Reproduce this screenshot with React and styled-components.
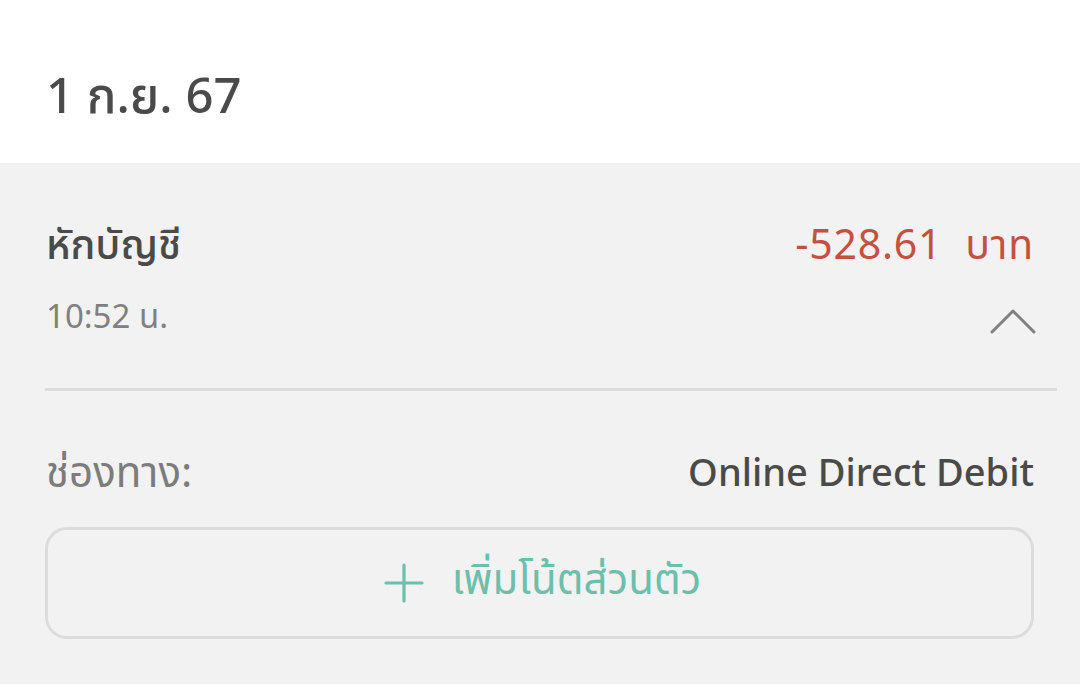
import React from "react";
import styled, { createGlobalStyle } from "styled-components";

const Global = createGlobalStyle`
  html, body { margin: 0; padding: 0; background: #ffffff; }
  body { font-family: "Noto Sans", "Noto Sans Thai", "Noto Sans Thai UI", sans-serif; }
  * { box-sizing: border-box; }
`;

const Page = styled.div`
  width: 1080px;
  height: 687px;
  display: flex;
  flex-direction: column;
  background: #ffffff;
  overflow: hidden;
`;

const DateHeader = styled.div`
  height: 163px;
  padding: 64px 0 0 46px;
  font-size: 49px;
  font-weight: 500;
  color: #4a4a4a;
  line-height: 60px;
`;

const Panel = styled.section`
  background: #f2f2f2;
  height: 521px;
  padding: 54px 23px 0 46px;
  display: flex;
  flex-direction: column;
`;

const Inner = styled.div`
  padding-right: 23px;
  margin-top: ${(p) => p.$top || 0}px;
`;

const Row = styled.div`
  display: flex;
  justify-content: space-between;
  align-items: ${(p) => p.$align || "center"};
  margin-top: ${(p) => p.$top || 0}px;
`;

const Title = styled.div`
  font-size: 41px;
  font-weight: 500;
  color: #4a4a4a;
  line-height: 52px;
`;

const Amount = styled.div`
  font-size: 41px;
  font-weight: 400;
  color: #c4513f;
  line-height: 52px;
  letter-spacing: 0.8px;
  white-space: pre;
`;

const Time = styled.div`
  font-size: 33px;
  color: #808080;
  line-height: 40px;
`;

const Chevron = styled.svg`
  width: 48px;
  height: 27px;
  margin-top: 12px;
  margin-right: -3px;
`;

const Divider = styled.hr`
  border: none;
  height: 3px;
  background: #dcdcdc;
  margin: 52px 0 0 -1px;
`;

const Label = styled.div`
  font-size: 42px;
  color: #7c7c7c;
  line-height: 48px;
`;

const Value = styled.div`
  font-size: 38px;
  font-weight: 500;
  color: #4a4a4a;
  line-height: 48px;
`;

const NoteButton = styled.button`
  margin: 32px 23px 0 -1px;
  height: 112px;
  border: 3px solid #dcdcdc;
  border-radius: 22px;
  background: #f2f2f2;
  display: flex;
  align-items: center;
  justify-content: center;
  gap: 28px;
  font-family: inherit;
  font-size: 42px;
  color: #6cbfad;
  padding: 0 0 4px 6px;
`;

const PlusIcon = styled.svg`
  width: 40px;
  height: 40px;
  margin-top: 4px;
`;

export default function App() {
  return (
    <Page>
      <Global />
      <DateHeader>1 ก.ย. 67</DateHeader>
      <Panel>
        <Inner>
          <Row>
            <Title>หักบัญชี</Title>
            <Amount>-528.61  บาท</Amount>
          </Row>
          <Row $align="flex-start" $top={27}>
            <Time>10:52 น.</Time>
            <Chevron viewBox="0 0 48 27" fill="none">
              <path d="M3 24 L24 3 L45 24" stroke="#7f7f7f" strokeWidth="3" strokeLinecap="round" strokeLinejoin="round" />
            </Chevron>
          </Row>
        </Inner>
        <Divider />
        <Inner $top={56}>
          <Row>
            <Label>ช่องทาง:</Label>
            <Value>Online Direct Debit</Value>
          </Row>
        </Inner>
        <NoteButton>
          <PlusIcon viewBox="0 0 40 40" fill="none">
            <path d="M20 2 V38 M2 20 H38" stroke="#6cbfad" strokeWidth="3.2" strokeLinecap="round" />
          </PlusIcon>
          <span>เพิ่มโน้ตส่วนตัว</span>
        </NoteButton>
      </Panel>
    </Page>
  );
}
